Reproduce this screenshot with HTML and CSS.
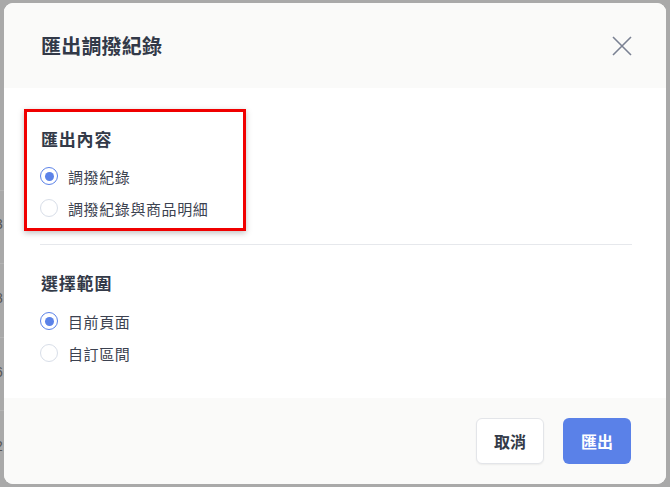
FILE: index.html
```html
<!DOCTYPE html>
<html lang="zh-Hant">
<head>
    <meta charset="UTF-8">
    <meta name="viewport" content="width=device-width, initial-scale=1.0">
    <title>匯出調撥紀錄</title>
    <link rel="stylesheet" href="styles.css">
</head>
<body>

<div class="backdrop">
    <span class="row-num n1">3</span>
    <span class="row-num n2">8</span>
    <span class="row-num n3">6</span>
    <span class="row-num n4">2</span>
</div>

<div class="modal">
    <div class="modal-header">
        <h1>匯出調撥紀錄</h1>
        <button class="close-btn" type="button" aria-label="關閉">
            <svg width="20" height="20" viewBox="0 0 20 20">
                <path d="M1 1 L19 19 M19 1 L1 19" stroke="#7a8193" stroke-width="1.6" fill="none"/>
            </svg>
        </button>
    </div>

    <form class="modal-body" id="export-form">
        <div class="section">
            <h2>匯出內容</h2>
            <label class="radio-row">
                <input type="radio" name="content" value="records" checked>
                <span class="radio-mark"></span>
                <span>調撥紀錄</span>
            </label>
            <label class="radio-row">
                <input type="radio" name="content" value="details">
                <span class="radio-mark"></span>
                <span>調撥紀錄與商品明細</span>
            </label>
        </div>

        <hr class="divider">

        <div class="section">
            <h2>選擇範圍</h2>
            <label class="radio-row">
                <input type="radio" name="range" value="page" checked>
                <span class="radio-mark"></span>
                <span>目前頁面</span>
            </label>
            <label class="radio-row">
                <input type="radio" name="range" value="custom">
                <span class="radio-mark"></span>
                <span>自訂區間</span>
            </label>
        </div>

        <div class="highlight-box"></div>
    </form>

    <div class="modal-footer">
        <button class="btn btn-cancel" type="button">取消</button>
        <button class="btn btn-primary" type="submit" form="export-form">匯出</button>
    </div>
</div>

</body>
</html>
```

FILE: styles.css
```css
* {
    box-sizing: border-box;
}

body {
    margin: 0;
    width: 670px;
    height: 487px;
    overflow: hidden;
    background-color: #a9a9a9;
    font-family: "Noto Sans CJK TC", "Noto Sans", sans-serif;
    color: #333a48;
    position: relative;
}

/* table behind the overlay */
.backdrop {
    position: absolute;
    inset: 0;
    background-image:
        linear-gradient(#b3b3b3, #b3b3b3),
        linear-gradient(#b3b3b3, #b3b3b3),
        linear-gradient(#b3b3b3, #b3b3b3),
        linear-gradient(#b3b3b3, #b3b3b3);
    background-size: 6px 1px, 6px 1px, 6px 1px, 6px 1px;
    background-position: 0 190px, 0 263px, 0 337px, 0 410px;
    background-repeat: no-repeat;
}

.row-num {
    position: absolute;
    left: -5px;
    font-family: "Liberation Sans", Arial, sans-serif;
    font-size: 14px;
    color: #555;
}

.n1 { top: 216px; }
.n2 { top: 290px; }
.n3 { top: 364px; }
.n4 { top: 438px; }

.modal {
    position: relative;
    margin: 3px 0 0 4px;
    width: 662px;
    height: 481px;
    background-color: #ffffff;
    border-radius: 9px;
    overflow: hidden;
    display: flex;
    flex-direction: column;
}

.modal-header {
    height: 85px;
    background-color: #fafaf9;
    display: flex;
    align-items: center;
    justify-content: space-between;
    padding: 0 34px 0 37px;
}

.modal-header h1 {
    margin: 0;
    font-size: 20px;
    font-weight: 700;
    color: #323948;
    letter-spacing: 0.2px;
}

.close-btn {
    background: none;
    border: none;
    padding: 0;
    width: 20px;
    height: 20px;
    cursor: pointer;
    display: flex;
}

.modal-body {
    position: relative;
    flex: 1;
    padding: 39px 34px 0 36px;
}

.section h2 {
    margin: 0 0 9px 1px;
    font-size: 17px;
    line-height: 24px;
    font-weight: 700;
    letter-spacing: 0.8px;
    color: #333a48;
}

.radio-row {
    display: flex;
    align-items: center;
    height: 32px;
    font-size: 15px;
    letter-spacing: 0.6px;
    color: #3c4250;
    cursor: pointer;
}

.radio-row input {
    display: none;
}

.radio-mark {
    width: 18px;
    height: 18px;
    margin: 0 10px 0 0;
    border: 1px solid #d8dee8;
    border-radius: 50%;
    background-color: #ffffff;
    display: flex;
    align-items: center;
    justify-content: center;
}

.radio-row input:checked + .radio-mark {
    border: 1.5px solid #5b82e8;
}

.radio-row input:checked + .radio-mark::after {
    content: "";
    width: 9px;
    height: 9px;
    border-radius: 50%;
    background-color: #5b82e8;
}

.divider {
    margin: 20px 0 26px 0;
    border: none;
    border-top: 1px solid #e6e8ec;
}

.section + .divider + .section h2 {
    margin-bottom: 10px;
}

/* red frame drawn over the first section */
.highlight-box {
    position: absolute;
    left: 20px;
    top: 21px;
    width: 222px;
    height: 122px;
    border: 3px solid #f00000;
    box-shadow: 0 2px 6px rgba(0, 0, 0, 0.25);
    pointer-events: none;
}

.modal-footer {
    height: 86px;
    background-color: #fafaf9;
    display: flex;
    align-items: center;
    justify-content: flex-end;
    gap: 19px;
    padding: 0 35px 0 0;
}

.btn {
    width: 68px;
    height: 46px;
    border-radius: 6px;
    font-family: "Noto Sans CJK TC", "Noto Sans", sans-serif;
    font-size: 16px;
    font-weight: 700;
    cursor: pointer;
}

.btn-cancel {
    background-color: #ffffff;
    border: 1px solid #e3e5e9;
    color: #333a48;
    box-shadow: 0 1px 2px rgba(0, 0, 0, 0.06);
}

.btn-primary {
    background-color: #5a81e8;
    border: none;
    color: #ffffff;
}
```
